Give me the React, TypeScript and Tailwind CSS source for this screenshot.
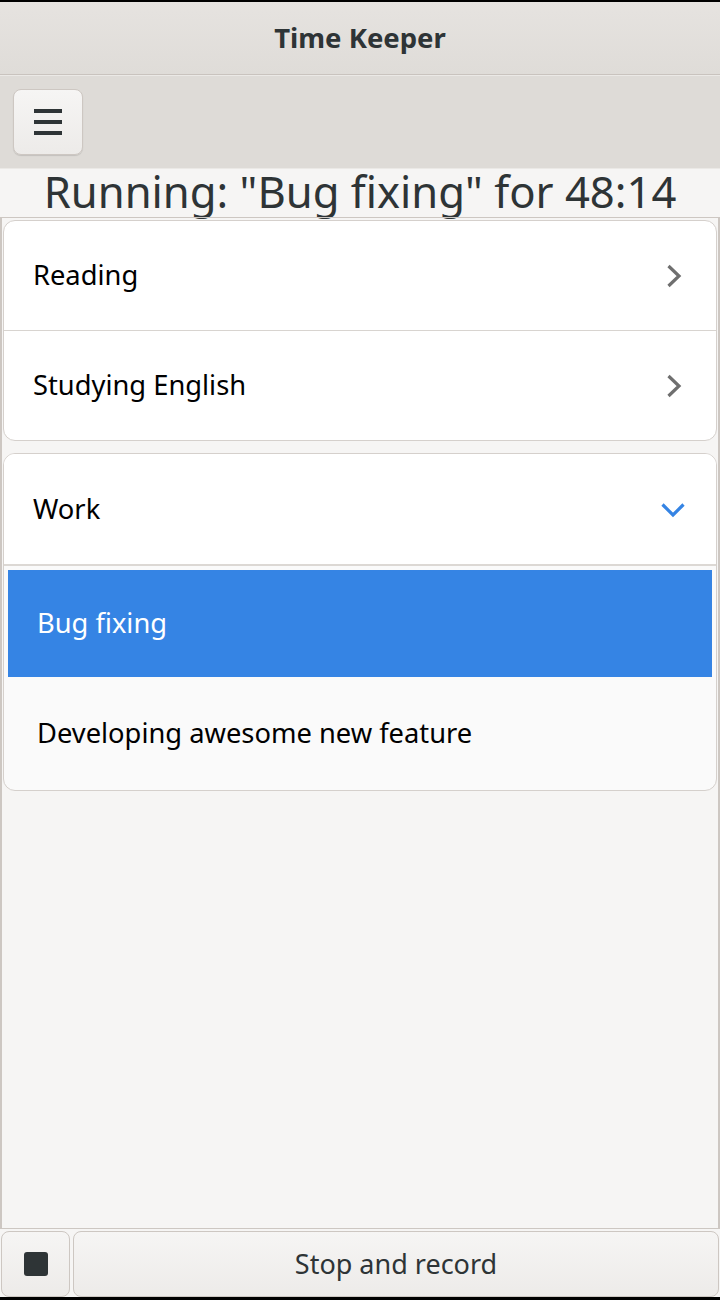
import { type ReactNode } from "react";

const font = "font-['Noto_Sans',sans-serif]";

const ChevronRight = () => (
    <svg width="24" height="24" viewBox="0 0 24 24" fill="none" stroke="#6f6f6f" strokeWidth="3.2" strokeLinecap="butt" strokeLinejoin="miter">
        <path d="M7.5 2 L18 12 L7.5 22" />
    </svg>
);

const ChevronDown = () => (
    <svg width="24" height="24" viewBox="0 0 24 24" fill="none" stroke="#3584e4" strokeWidth="3.2" strokeLinecap="butt" strokeLinejoin="miter">
        <path d="M1.5 7.5 L12 18 L22.5 7.5" />
    </svg>
);

const Row = ({ label, icon, className = "" }: { label: string; icon?: ReactNode; className?: string }) => (
    <div className={`flex items-center justify-between pl-[29px] pr-[31px] text-[27.3px] text-black ${className}`}>
        <span>{label}</span>
        {icon}
    </div>
);

const App = () => {
    return (
        <div className={`${font} h-[1300px] w-[720px] flex flex-col bg-[#f6f5f4] overflow-hidden`}>
            <div className="h-[2px] bg-black" />
            {/* header bar */}
            <div className="h-[73px] flex items-center justify-center bg-gradient-to-b from-[#e6e3e0] to-[#dfdcd8] border-b border-[#c9c3be]">
                <h1 className="text-[27.5px] font-bold text-[#2e3436]">Time Keeper</h1>
            </div>
            {/* toolbar */}
            <div className="h-[94px] pt-[13px] pl-[13px] bg-[#dedbd7] border-t border-[#ebe9e6] border-b border-[#c9c3be]">
                <button className="w-[70px] h-[66px] flex items-center justify-center rounded-[8px] border border-[#cdc7c2] bg-gradient-to-b from-[#f6f5f4] to-[#edebe9] shadow-[0_1px_1px_rgba(0,0,0,0.12)]">
                    <span className="flex flex-col gap-[7px]">
                        <span className="block w-[28px] h-[4px] bg-[#2e3436]" />
                        <span className="block w-[28px] h-[4px] bg-[#2e3436]" />
                        <span className="block w-[28px] h-[4px] bg-[#2e3436]" />
                    </span>
                </button>
            </div>
            {/* status */}
            <div className="h-[48px] flex items-center justify-center text-[43.6px] leading-[48px] text-[#2e3436] pb-[4px]">
                Running: "Bug fixing" for 48:14
            </div>
            {/* scrolled list */}
            <div className="flex-1 border-t border-x-2 border-b border-[#cdc7c2] pt-[2px] px-[1px] flex flex-col gap-[12px]">
                <div className="rounded-[12px] border border-[#d5d0cc] bg-white overflow-hidden">
                    <Row label="Reading" icon={<ChevronRight />} className="h-[110px] border-b border-[#d8d4d0]" />
                    <Row label="Studying English" icon={<ChevronRight />} className="h-[109px]" />
                </div>
                <div className="rounded-[12px] border border-[#d5d0cc] bg-[#fafafa] overflow-hidden">
                    <Row label="Work" icon={<ChevronDown />} className="h-[112px] bg-white border-b-2 border-[#dcd8d4]" />
                    <div className="pt-[4px] px-[4px]">
                        <Row label="Bug fixing" className="h-[107px] bg-[#3584e4] !text-white" />
                        <Row label="Developing awesome new feature" className="h-[113px]" />
                    </div>
                </div>
            </div>
            {/* bottom actions */}
            <div className="h-[68px] pt-[2px] flex gap-[3px] px-[1px]">
                <button className="w-[69px] h-[66px] flex items-center justify-center rounded-[8px] border border-[#cdc7c2] bg-gradient-to-b from-[#f6f5f4] to-[#edebe9]">
                    <span className="block w-[24px] h-[24px] rounded-[3px] bg-[#2e3436]" />
                </button>
                <button className="flex-1 h-[66px] flex items-center justify-center rounded-[8px] border border-[#cdc7c2] bg-gradient-to-b from-[#f6f5f4] to-[#edebe9] text-[27px] text-[#2e3436]">
                    Stop and record
                </button>
            </div>
            <div className="h-[3px] bg-black" />
        </div>
    );
};

export default App;
